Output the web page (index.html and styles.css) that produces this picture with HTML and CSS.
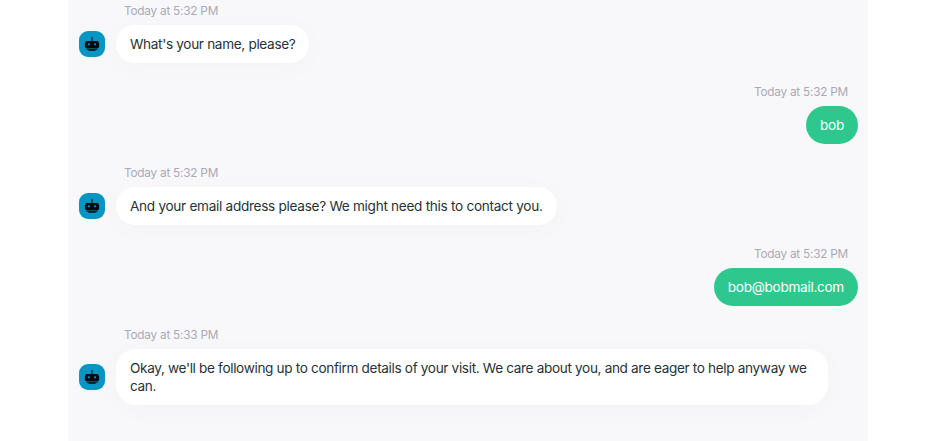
FILE: index.html
```html
<!DOCTYPE html>
<html lang="en">
<head>
<meta charset="utf-8">
<title>Chat</title>
<link rel="stylesheet" href="styles.css">
</head>
<body>
<svg width="0" height="0" class="defs" aria-hidden="true">
  <symbol id="bot" viewBox="0 0 26 26">
    <rect x="12.500" y="6" width="1" height="4" fill="#020c10"/>
    <rect x="6.700" y="10" width="12.600" height="7" rx="0.600" fill="#020c10"/>
    <rect x="5.900" y="11.600" width="14.200" height="5" rx="0.500" fill="#020c10"/>
    <path d="M7 17.500h12q-.4 1.200-1.700 1.200H8.700Q7.400 18.700 7 17.500z" fill="#020c10"/>
    <rect x="9.500" y="18.600" width="7" height="1.200" fill="#020c10"/>
    <circle cx="9.900" cy="13.300" r="1.150" fill="#0795c3"/>
    <circle cx="16.100" cy="13.300" r="1.150" fill="#0795c3"/>
  </symbol>
</svg>
<main class="chat">
  <section class="message">
    <time class="time">Today at 5:32 PM</time>
    <div class="row">
      <svg class="avatar"><use href="#bot"/></svg>
      <p class="bubble short">What's your name, please?</p>
    </div>
  </section>
  <section class="message own">
    <time class="time">Today at 5:32 PM</time>
    <p class="bubble">bob</p>
  </section>
  <section class="message">
    <time class="time">Today at 5:32 PM</time>
    <div class="row">
      <svg class="avatar"><use href="#bot"/></svg>
      <p class="bubble">And your email address please? We might need this to contact you.</p>
    </div>
  </section>
  <section class="message own">
    <time class="time">Today at 5:32 PM</time>
    <p class="bubble">bob@bobmail.com</p>
  </section>
  <section class="message">
    <time class="time">Today at 5:33 PM</time>
    <div class="row">
      <svg class="avatar"><use href="#bot"/></svg>
      <p class="bubble long">Okay, we'll be following up to confirm details of your visit. We care about you, and are eager to help anyway we can.</p>
    </div>
  </section>
</main>
</body>
</html>
```
FILE: styles.css
```css
* { box-sizing: border-box; }

body {
  margin: 0;
  background: #fff;
  font-family: Inter, "Liberation Sans", sans-serif;
  font-size: 13.6px;
  line-height: 18px;
  color: #263238;
}

.defs { display: none; }

.chat {
  display: flex;
  flex-direction: column;
  gap: 20px;
  width: 800px;
  height: 441px;
  margin-left: 68px;
  padding: 2px 10px 0 11px;
  overflow: hidden;
  background: #f8f8fb;
}

.message {
  display: flex;
  flex-direction: column;
  align-items: flex-start;
  gap: 5px;
}

.own { align-items: flex-end; }

.time {
  padding: 0 10px 0 45px;
  font-size: 11.8px;
  letter-spacing: -0.23px;
  color: #aaa9b5;
}

.row {
  display: flex;
  align-items: center;
  gap: 11px;
}

.avatar {
  flex: none;
  width: 26px;
  height: 26px;
  border-radius: 9px;
  background: #0795c3;
}

.bubble {
  max-width: 712px;
  margin: 0;
  padding: 10px 14px;
  border-radius: 20px;
  background: #fff;
  box-shadow: 0 4px 28px rgba(0, 0, 0, 0.022);
  letter-spacing: -0.29px;
}

.short { letter-spacing: -0.33px; }

.long { letter-spacing: -0.342px; }

.own .bubble {
  background: #2ec88f;
  color: #fff;
  box-shadow: none;
}
```
